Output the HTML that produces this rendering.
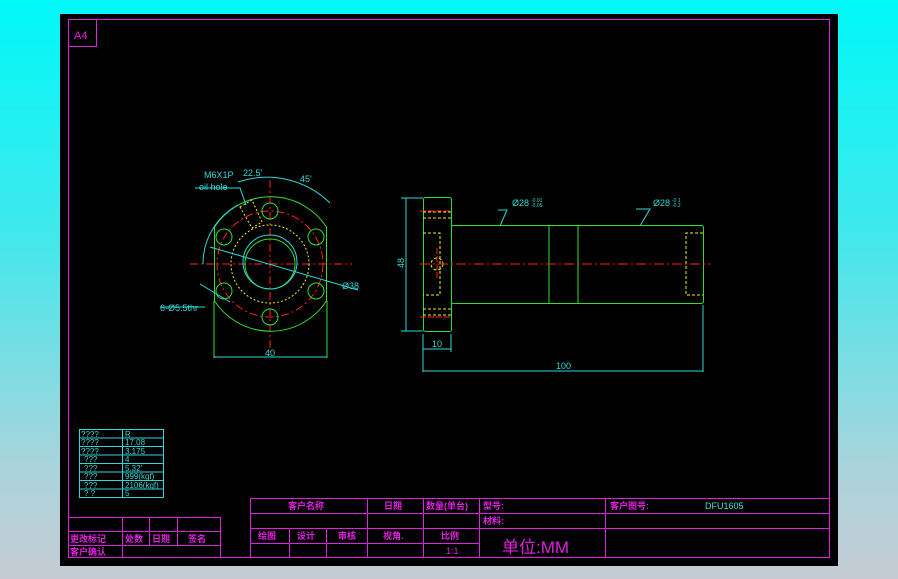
<!DOCTYPE html>
<html><head><meta charset="utf-8"><style>
html,body{margin:0;padding:0;width:898px;height:579px;overflow:hidden;background:linear-gradient(to bottom,#00f8f8 0%,#40e8ec 40%,#a8d4dc 80%,#c6cbd3 100%);}
svg{position:absolute;left:0;top:0}
text{font-family:"Liberation Sans","Noto Sans CJK SC",sans-serif}
</style></head><body>
<svg width="898" height="579" viewBox="0 0 898 579">
<rect x="60" y="14" width="778" height="552" fill="#000"/>
<g fill="none" stroke="#e020e0" stroke-width="1">
<rect x="68.5" y="19.5" width="761" height="538"/>
<path d="M68.5 46.5H96.5V19.5"/>
<!-- left title block -->
<path d="M68.5 517.5H220.5V558M68.5 531.5H220.5M68.5 545.5H220.5M122.5 517.5V558M149.5 517.5V545.5M177.5 517.5V545.5"/>
<!-- right title block -->
<path d="M250.5 498.5H830M250.5 498.5V558M250.5 513.5H605.5M250.5 528.5H830M250.5 543.5H479.5M606 513.5H830M289.5 528.5V558M326.5 528.5V558M367.5 498.5V558M423.5 498.5V558M479.5 498.5V558M605.5 498.5V558"/>
</g>
<text x="74" y="39" fill="#e020e0" font-size="11">A4</text>
<g fill="#e020e0" font-size="9" font-weight="bold">
<text x="288" y="509">客户名称</text>
<text x="384" y="509">日期</text>
<text x="426" y="509">数量(单台)</text>
<text x="483" y="509">型号:</text>
<text x="610" y="509">客户图号:</text>
<text x="483" y="524">材料:</text>
<text x="258" y="539">绘图</text>
<text x="297" y="539">设计</text>
<text x="338" y="539">审核</text>
<text x="383" y="539">视角.</text>
<text x="441" y="539">比例</text>
<text x="70" y="542">更改标记</text>
<text x="125" y="542">处数</text>
<text x="152" y="542">日期</text>
<text x="188" y="542">签名</text>
<text x="70" y="555">客户确认</text>
<text x="446" y="554" font-weight="normal">1:1</text>
<text x="502" y="553" font-size="17" font-weight="normal">单位:MM</text>
</g>
<text x="705" y="509" fill="#40e0e0" font-size="9">DFU1605</text>
<!-- param table -->
<g stroke="#30d8d8" fill="none"><rect x="79.5" y="429.5" width="84" height="68"/>
<path d="M122.5 429.5V497.5M79.5 438H163.5M79.5 446.5H163.5M79.5 455H163.5M79.5 463.5H163.5M79.5 472H163.5M79.5 480.5H163.5M79.5 489H163.5"/></g>
<g fill="#30d8d8" font-size="8">
<text x="81" y="437">????</text><text x="125" y="437">R</text>
<text x="81" y="445">????</text><text x="125" y="445">17.08</text>
<text x="81" y="454">????</text><text x="125" y="454">3.175</text>
<text x="84" y="462">???</text><text x="125" y="462">4</text>
<text x="84" y="471">???</text><text x="125" y="471">5.32'</text>
<text x="84" y="479">???</text><text x="125" y="479">999(kgf)</text>
<text x="84" y="488">???</text><text x="125" y="488">2106(kgf)</text>
<text x="84" y="496">?  ?</text><text x="125" y="496">5</text>
</g>
<!-- left view -->
<g fill="none">
<g stroke="#ff2020" stroke-dasharray="8 3 2 3">
<path d="M190 264H352M270 180V352"/>
<circle cx="270" cy="264" r="53"/>
</g>
<g stroke="#30e030">
<path d="M214.5 227A67 67 0 0 1 326.5 227M214.5 301A67 67 0 0 0 326.5 301M214.5 227V301M326.5 227V301" />
<path d="M214 301V358M327 301V358"/>
<circle cx="270" cy="264" r="25"/>
<circle cx="270" cy="211" r="8"/><circle cx="270" cy="317" r="8"/>
<circle cx="224" cy="237" r="8"/><circle cx="316" cy="237" r="8"/>
<circle cx="224" cy="291" r="8"/><circle cx="316" cy="291" r="8"/>
</g>
<circle cx="270" cy="264" r="39" stroke="#f0f020" stroke-dasharray="2 2"/>
<path d="M240 207L252 200L262 222L252 228Z" stroke="#f0f020" stroke-dasharray="2 2"/>
<g stroke="#30d8d8">
<circle cx="270" cy="262" r="27"/>
<path d="M203 264A67 67 0 0 1 238 205M238 182A90 90 0 0 1 330 203M210 247L358 290M200 284L230 302M160 307H205M214 357H327M195 188H240L246 205M401 198H423M401 331H423M406 198V331M423 334V372M451 334V352M703 305V372M423 349H451M423 371H703M498 210H507L500 226M636 209H650L640 226"/>
</g>
</g>
<g fill="#30d8d8" font-size="9">
<text x="204" y="178">M6X1P</text>
<text x="199" y="190">oil hole</text>
<text x="243" y="176">22.5'</text>
<text x="300" y="182">45'</text>
<text x="342" y="289">Ø38</text>
<text x="160" y="311">6-Ø5.5thr</text>
<text x="265" y="356">40</text>
<text x="432" y="347">10</text>
<text x="556" y="369">100</text>
<text x="512" y="206">Ø28</text><text x="531" y="202" font-size="5">-0.01</text><text x="531" y="207" font-size="5">-0.05</text>
<text x="653" y="206">Ø28</text><text x="672" y="202" font-size="5">-0.1</text><text x="672" y="207" font-size="5">-0.2</text>
<text x="404" y="268" transform="rotate(-90 404 268)">48</text>
</g>
<!-- right view -->
<g fill="none">
<g stroke="#30e030">
<rect x="423.5" y="197.5" width="28" height="134" rx="2"/>
<rect x="451.5" y="225.5" width="252" height="78" rx="2"/>
<path d="M549 225V303M578 225V303"/>
</g>
<g stroke="#f0f020" stroke-dasharray="3 2">
<path d="M423 212H451M423 218H451M423 309H451M423 315H451M423 233H440V295H423M703 233H686V295H703"/>
<circle cx="437" cy="264" r="6"/>
</g>
<g stroke="#ff2020">
<path d="M420 264H710" stroke-dasharray="10 3 2 3"/>
<path d="M420 211H451M420 317H451M437 248V280" stroke-dasharray="6 2"/>
</g>
</g>
</svg>
</body></html>
